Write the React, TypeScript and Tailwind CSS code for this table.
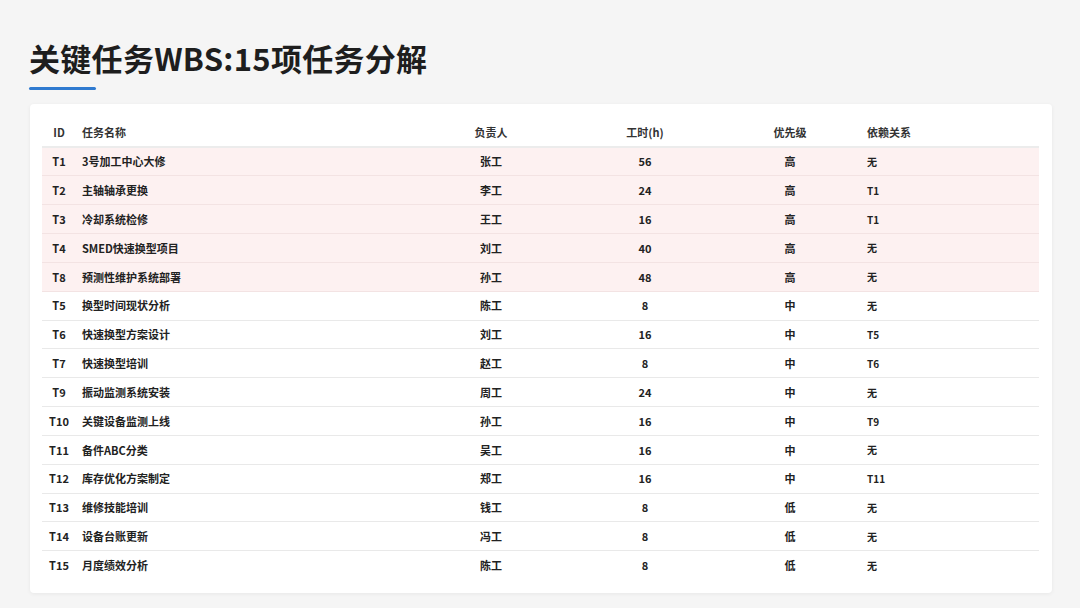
const rows: [string, string, string, string, string, string, boolean][] = [
  ['T1', '3号加工中心大修', '张工', '56', '高', '无', true],
  ['T2', '主轴轴承更换', '李工', '24', '高', 'T1', true],
  ['T3', '冷却系统检修', '王工', '16', '高', 'T1', true],
  ['T4', 'SMED快速换型项目', '刘工', '40', '高', '无', true],
  ['T8', '预测性维护系统部署', '孙工', '48', '高', '无', true],
  ['T5', '换型时间现状分析', '陈工', '8', '中', '无', false],
  ['T6', '快速换型方案设计', '刘工', '16', '中', 'T5', false],
  ['T7', '快速换型培训', '赵工', '8', '中', 'T6', false],
  ['T9', '振动监测系统安装', '周工', '24', '中', '无', false],
  ['T10', '关键设备监测上线', '孙工', '16', '中', 'T9', false],
  ['T11', '备件ABC分类', '吴工', '16', '中', '无', false],
  ['T12', '库存优化方案制定', '郑工', '16', '中', 'T11', false],
  ['T13', '维修技能培训', '钱工', '8', '低', '无', false],
  ['T14', '设备台账更新', '冯工', '8', '低', '无', false],
  ['T15', '月度绩效分析', '陈工', '8', '低', '无', false],
]

const font = { fontFamily: '"Noto Sans CJK SC", "Noto Sans", sans-serif' }

export default function App() {
  return (
    <div className="w-[1080px] h-[608px] bg-[#f5f5f5] overflow-hidden text-[#222]" style={font}>
      <div className="pl-[29px] pt-[38px]">
        <h1 className="text-[31px] leading-[40px] font-bold tracking-[0.3px] text-[#1e1e1e]">关键任务WBS:15项任务分解</h1>
        <div className="mt-[9px] w-[67px] h-[3px] bg-[#2f7ad0] rounded-full" />
      </div>
      <div className="ml-[30px] mt-[14px] w-[1022px] h-[489px] bg-white rounded-[4px] shadow-[0_1px_4px_rgba(0,0,0,0.06)] px-[12px] pt-[14px]">
        <table className="w-[997px] table-fixed border-collapse text-[11px] font-bold">
          <colgroup>
            <col className="w-[34px]" />
            <col className="w-[344px]" />
            <col className="w-[142px]" />
            <col className="w-[166px]" />
            <col className="w-[124px]" />
            <col className="w-[187px]" />
          </colgroup>
          <thead>
            <tr className="h-[29px] border-b-2 border-[#ececec] text-[#333]">
              <th className="text-center font-bold">ID</th>
              <th className="text-left pl-[6px] font-bold">任务名称</th>
              <th className="text-center font-bold">负责人</th>
              <th className="text-center font-bold">工时(h)</th>
              <th className="text-center font-bold">优先级</th>
              <th className="text-left pl-[15px] font-bold">依赖关系</th>
            </tr>
          </thead>
          <tbody>
            {rows.map(([id, name, owner, hours, pri, dep, hi]) => (
              <tr
                key={id}
                className={
                  hi
                    ? 'h-[28.85px] bg-[#fdf1f1] border-b border-[#f3e3e3]'
                    : 'h-[28.85px] border-b border-[#e9e9e9] last:border-b-0'
                }
              >
                <td className="text-center">{id}</td>
                <td className="text-left pl-[6px]">{name}</td>
                <td className="text-center">{owner}</td>
                <td className="text-center">{hours}</td>
                <td className="text-center">{pri}</td>
                <td className="text-left pl-[15px] text-[10px]">{dep}</td>
              </tr>
            ))}
          </tbody>
        </table>
      </div>
    </div>
  )
}
